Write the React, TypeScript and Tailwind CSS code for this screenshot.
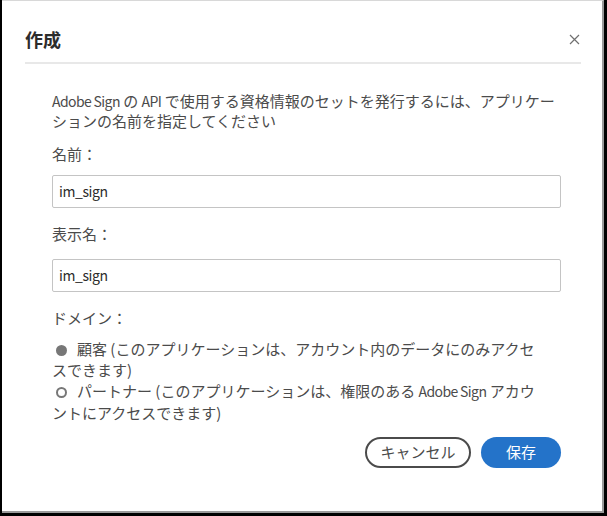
import React from "react";

const font = { fontFamily: '"Noto Sans CJK JP", "Noto Sans", sans-serif' };

function L({ children }: { children: React.ReactNode }) {
  return <span className="text-[14px] tracking-[-0.6px]">{children}</span>;
}

export default function App() {
  return (
    <div
      className="w-[607px] h-[516px] bg-black pl-[2px] pr-[3px] pb-[3px]"
      style={font}
    >
      <div className="h-full bg-white border-t border-r-2 border-b-2 border-t-[#d8d8d8] border-r-[#9a9a9a] border-b-[#9a9a9a] flex flex-col">
        <div className="ml-[23px] mr-[21px] pt-[26px]">
          <div className="flex items-center justify-between h-[24px]">
            <h1 className="text-[18px] leading-[24px] font-bold text-[#2c2c2c]">作成</h1>
            <svg width="11" height="11" viewBox="0 0 11 11" className="mr-[1px]">
              <path d="M1 1 L10 10 M10 1 L1 10" stroke="#707070" strokeWidth="1.2" fill="none" />
            </svg>
          </div>
          <div className="mt-[11px] h-[2px] bg-[#e8e8e8]" />
        </div>
        <div className="ml-[50px] mr-[41px] text-[15px] text-[#4b4b4b] whitespace-nowrap">
          <p className="mt-[27px] leading-[20px]">
            <L>Adobe Sign</L> の <L>API</L> で使用する資格情報のセットを発行するには、アプリケー
            <br />
            ションの名前を指定してください
          </p>
          <div className="mt-[13px] leading-[20px]">名前：</div>
          <div className="mt-[11px] h-[33px] border border-[#c4c4c4] rounded-[2px] flex items-center px-[6px] text-[#2c2c2c]">
            <span className="text-[14px] tracking-[-0.4px]">im_sign</span>
          </div>
          <div className="mt-[16px] leading-[20px]">表示名：</div>
          <div className="mt-[15px] h-[33px] border border-[#c4c4c4] rounded-[2px] flex items-center px-[6px] text-[#2c2c2c]">
            <span className="text-[14px] tracking-[-0.4px]">im_sign</span>
          </div>
          <div className="mt-[16px] leading-[20px]">ドメイン：</div>
          <div className="mt-[10px] leading-[21px]">
            <div>
              <span className="inline-block w-[11px] h-[11px] rounded-full bg-[#777777] ml-[4px] mr-[10px] align-[-1px]" />
              顧客 (このアプリケーションは、アカウント内のデータにのみアクセ
              <br />
              スできます)
            </div>
            <div>
              <span className="inline-block w-[11px] h-[11px] rounded-full border-2 border-[#777777] ml-[4px] mr-[10px] align-[-1px]" />
              パートナー (このアプリケーションは、権限のある <L>Adobe Sign</L> アカウ
              <br />
              ントにアクセスできます)
            </div>
          </div>
          <div className="mt-[14px] flex justify-end gap-[10px]">
            <button className="h-[31px] w-[106px] rounded-full border-2 border-[#4b4b4b] bg-white text-[15px] text-[#4b4b4b] flex items-center justify-center">
              キャンセル
            </button>
            <button className="h-[31px] w-[80px] rounded-full bg-[#2473c9] text-[15px] text-white flex items-center justify-center">
              保存
            </button>
          </div>
        </div>
      </div>
    </div>
  );
}
